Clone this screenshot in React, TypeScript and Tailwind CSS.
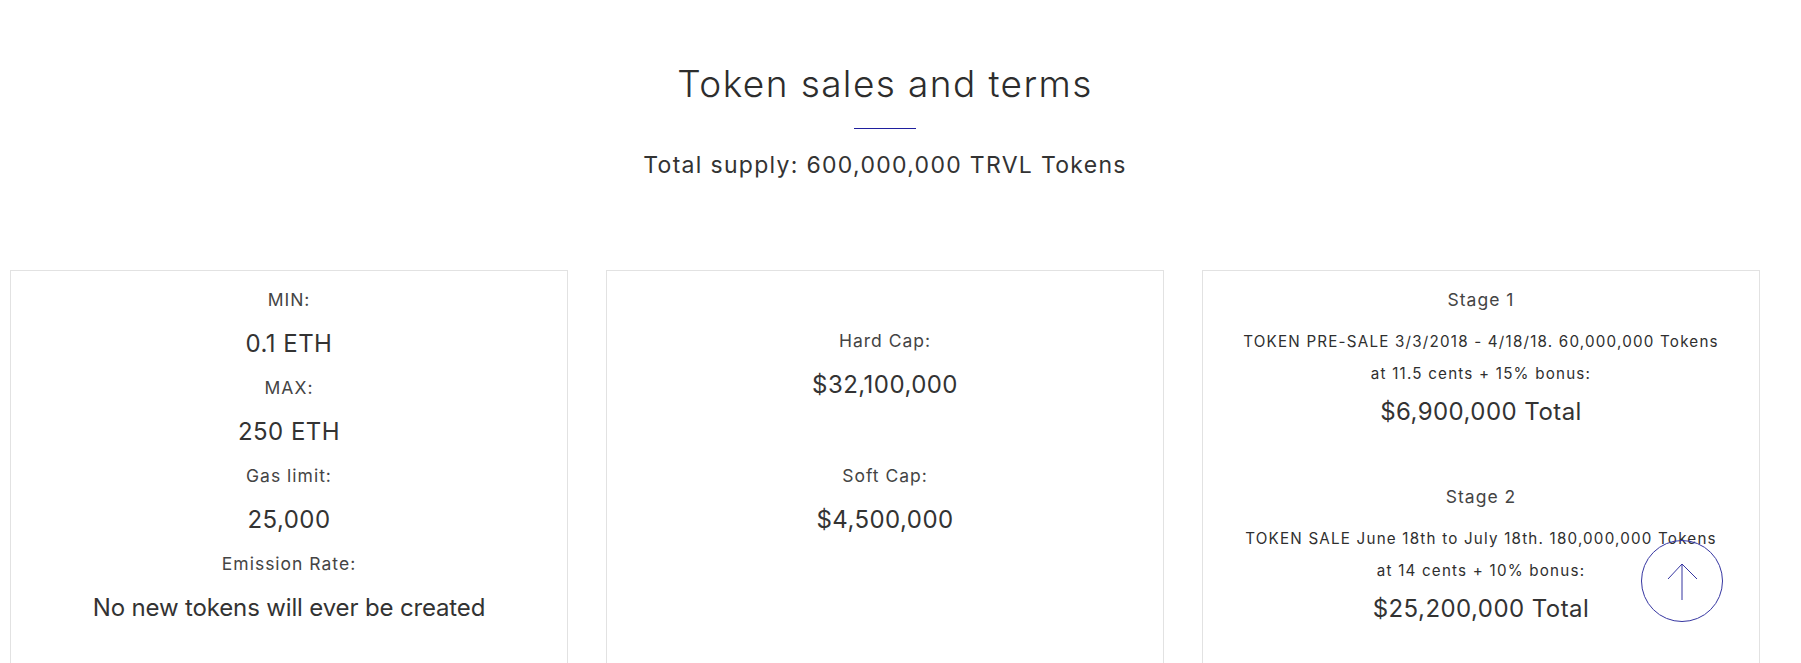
import React from "react";

const font = "font-['Inter','Liberation_Sans',sans-serif]";

function Label({ children }: { children: React.ReactNode }) {
  return <p className="text-[17.5px] leading-[44px] tracking-[1px] text-[#444]">{children}</p>;
}
function Value({ children, tight }: { children: React.ReactNode; tight?: boolean }) {
  return (
    <p className={tight ? "text-[24px] leading-[44px] tracking-[-0.15px] text-[#333]" : "text-[24px] leading-[44px] tracking-[0.45px] text-[#333]"}>
      {children}
    </p>
  );
}
function Small({ children }: { children: React.ReactNode }) {
  return <p className="text-[15.2px] leading-[32px] tracking-[1.2px] text-[#2f2f2f]">{children}</p>;
}

export default function App() {
  return (
    <div className={`${font} min-h-screen bg-white`}>
      <div className="w-[1770px] px-[10px] pb-[60px]">
        <div className="flex flex-col items-center pt-[62px]">
          <h2 className="text-[37px] font-light leading-[44px] tracking-[1.4px] text-[#2d2d2d]">Token sales and terms</h2>
          <div className="mt-[22px] h-px w-[62px] bg-[#1f1f9e]" />
          <p className="mt-[20px] text-[23px] leading-[32px] tracking-[1.3px] text-[#333]">Total supply: 600,000,000 TRVL Tokens</p>
        </div>

        <div className="mt-[89px] grid grid-cols-3 gap-[38px]">
          <div className="border border-[#e2e2e2] pt-[7px] pb-[60px] text-center">
            <Label>MIN:</Label>
            <Value>0.1 ETH</Value>
            <Label>MAX:</Label>
            <Value>250 ETH</Value>
            <Label>Gas limit:</Label>
            <Value>25,000</Value>
            <Label>Emission Rate:</Label>
            <Value tight>No new tokens will ever be created</Value>
          </div>

          <div className="border border-[#e2e2e2] pt-[48px] text-center">
            <Label>Hard Cap:</Label>
            <Value>$32,100,000</Value>
            <div className="h-[47px]" />
            <Label>Soft Cap:</Label>
            <Value>$4,500,000</Value>
          </div>

          <div className="border border-[#e2e2e2] pt-[7px] text-center">
            <Label>Stage 1</Label>
            <div className="mt-[4px]">
              <Small>TOKEN PRE-SALE 3/3/2018 - 4/18/18. 60,000,000 Tokens</Small>
              <Small>at 11.5 cents + 15% bonus:</Small>
            </div>
            <Value>$6,900,000 Total</Value>
            <div className="h-[41px]" />
            <Label>Stage 2</Label>
            <div className="mt-[4px]">
              <Small>TOKEN SALE June 18th to July 18th. 180,000,000 Tokens</Small>
              <Small>at 14 cents + 10% bonus:</Small>
            </div>
            <Value>$25,200,000 Total</Value>
          </div>
        </div>
      </div>

      <button
        aria-label="Back to top"
        className="fixed bottom-[41px] right-[78px] h-[82px] w-[82px] rounded-full border border-[#3535a0] bg-transparent"
      >
        <svg width="82" height="82" viewBox="0 0 82 82" className="absolute left-[-1px] top-[-1px]" fill="none" stroke="#3535a0" strokeWidth="1">
          <path d="M41 24 V60" />
          <path d="M27 39 L41 24 L56 39" />
        </svg>
      </button>
    </div>
  );
}
